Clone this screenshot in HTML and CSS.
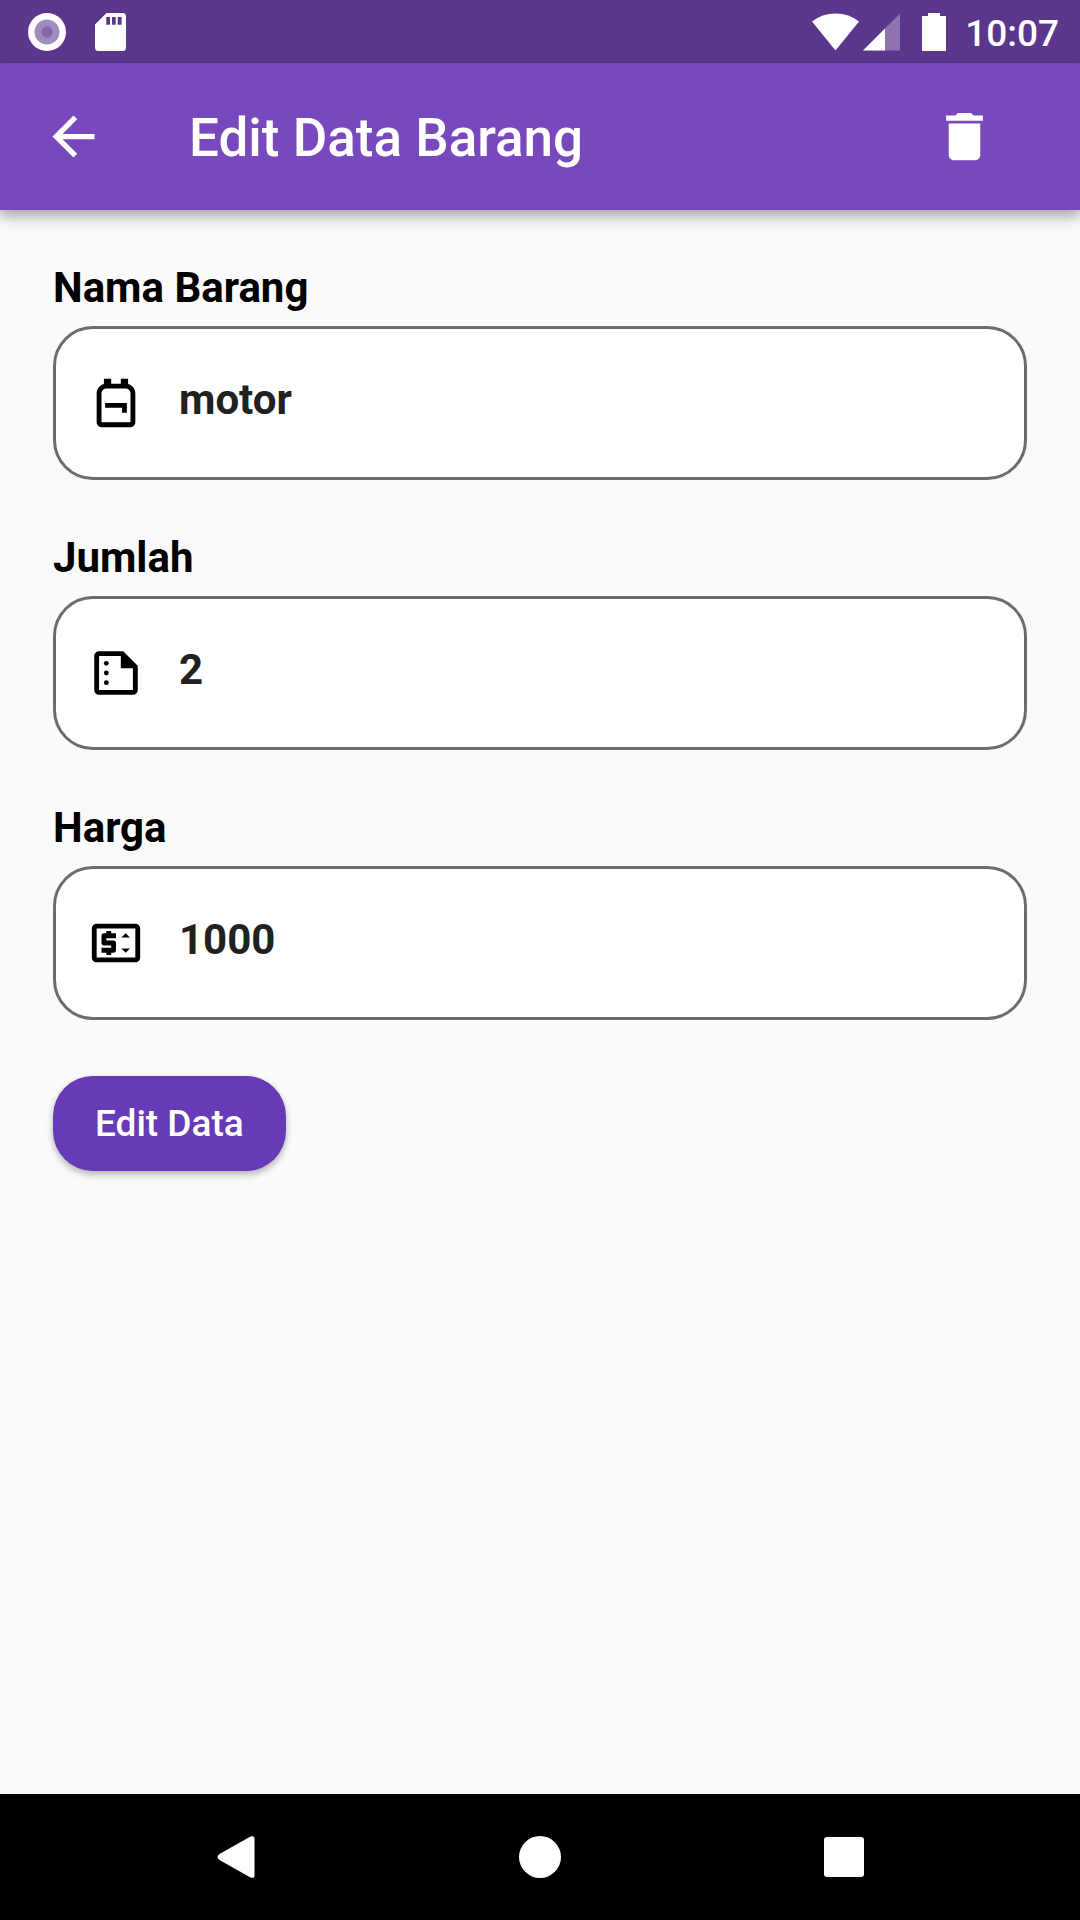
FILE: index.html
```html
<!DOCTYPE html>
<html lang="id">
<head>
<meta charset="utf-8">
<meta name="viewport" content="width=device-width, initial-scale=1">
<title>Edit Data Barang</title>
<link rel="stylesheet" href="styles.css">
</head>
<body>
<div class="status-bar">
  <div class="status-left">
    <svg class="status-dot" viewBox="0 0 38 38" aria-hidden="true"><circle cx="19" cy="19" r="19" fill="#fff"/><circle cx="19" cy="19" r="12.5" fill="#a08cbf"/><circle cx="19" cy="19" r="5.7" fill="#8467ab"/></svg>
    <svg class="status-sd" viewBox="0 0 31 38" aria-hidden="true"><path fill="#fff" fill-rule="evenodd" d="M11.500 0H27.500Q31 0 31 3.500V34.500Q31 38 27.500 38H3.500Q0 38 0 34.500V11.500ZM11.300 4V11.700H15V4ZM17 4V11.700H20.700V4ZM22.700 4V11.700H26.600V4Z"/></svg>
  </div>
  <div class="status-right">
    <svg class="status-wifi" viewBox="0 0 47 38" aria-hidden="true"><path fill="#fff" d="M0 8.500Q10 .5 23.500.5T47 8.500L23.500 37.500Z"/></svg>
    <svg class="status-signal" viewBox="0 0 37 38" aria-hidden="true"><path fill="#8d74ae" d="M37 .5V37.500H0Z"/><path fill="#fff" d="M22 15.500V37.500H0Z"/></svg>
    <svg class="status-battery" viewBox="0 0 24 38" aria-hidden="true"><path fill="#fff" d="M6 0H18V3H24V38H0V3H6Z"/></svg>
    <time class="clock">10:07</time>
  </div>
</div>
<header class="app-bar">
  <button class="icon-button" type="button" aria-label="Kembali">
    <svg class="icon" viewBox="0 0 24 24"><path d="M20 11H7.830l5.590-5.590L12 4l-8 8 8 8 1.410-1.410L7.830 13H20v-2z"/></svg>
  </button>
  <h1 class="title">Edit Data Barang</h1>
  <button class="icon-button" type="button" aria-label="Hapus">
    <svg class="icon" viewBox="0 0 24 24"><path d="M6 19c0 1.100.9 2 2 2h8c1.100 0 2-.9 2-2V7H6v12zM19 4h-3.500l-1-1h-5l-1 1H5v2h14V4z"/></svg>
  </button>
</header>
<main class="content">
  <form class="form">
    <div class="field">
      <label class="label" for="nama">Nama Barang</label>
      <div class="box">
        <svg class="field-icon" viewBox="0 0 24 24" aria-hidden="true"><path fill-rule="evenodd" d="M17 4.140V2h-3v2h-4V2H7v2.140C5.280 4.590 4 6.140 4 8v12c0 1.100.9 2 2 2h12c1.100 0 2-.9 2-2V8c0-1.860-1.280-3.410-3-3.860zM18 20H6V8c0-1.100.9-2 2-2h8c1.100 0 2 .9 2 2v12zM7.500 12v2h7v2h2v-4h-9z"/></svg>
        <input class="input" id="nama" type="text" value="motor">
      </div>
    </div>
    <div class="field">
      <label class="label" for="jumlah">Jumlah</label>
      <div class="box">
        <svg class="field-icon" viewBox="0 0 24 24" aria-hidden="true"><path fill-rule="evenodd" d="M15 3H5c-1.100 0-2 .9-2 2v14c0 1.100.9 2 2 2h14c1.100 0 2-.9 2-2V9l-6-6zM5 19V5h9v5h5v9H5z"/><circle cx="8" cy="8" r="1"/><circle cx="8" cy="12" r="1"/><circle cx="8" cy="16" r="1"/></svg>
        <input class="input" id="jumlah" type="text" inputmode="numeric" value="2">
      </div>
    </div>
    <div class="field">
      <label class="label" for="harga">Harga</label>
      <div class="box">
        <svg class="field-icon" viewBox="0 0 24 24" aria-hidden="true"><path fill-rule="evenodd" d="M20 4H4c-1.110 0-2 .89-2 2v12c0 1.110.89 2 2 2h16c1.110 0 2-.89 2-2V6c0-1.110-.89-2-2-2zm0 14H4V6h16v12z"/><path d="M8 17h2v-1h1c.55 0 1-.45 1-1v-3c0-.55-.45-1-1-1H8v-1h4V8h-2V7H8v1H7c-.55 0-1 .45-1 1v3c0 .55.45 1 1 1h3v1H6v2h2v1zM16 8l-1.750 1.750h3.500zM16 16l1.750-1.750h-3.500z"/></svg>
        <input class="input" id="harga" type="text" inputmode="numeric" value="1000">
      </div>
    </div>
    <button class="submit" type="button">Edit Data</button>
  </form>
</main>
<nav class="nav-bar" aria-label="Sistem">
  <button class="nav-button" type="button" aria-label="Kembali"><svg class="nav-icon" viewBox="0 0 42 42"><path d="M35.500.6Q39.500-1 39.500 3V39Q39.500 43 35.500 41.400L4.500 24Q.5 21 4.500 18Z"/></svg></button>
  <button class="nav-button" type="button" aria-label="Beranda"><svg class="nav-icon" viewBox="0 0 42 42"><circle cx="21" cy="21" r="21"/></svg></button>
  <button class="nav-button" type="button" aria-label="Terbaru"><svg class="nav-icon" viewBox="0 0 42 42"><rect x="1" y="1" width="40" height="40" rx="3"/></svg></button>
</nav>
</body>
</html>
```
FILE: styles.css
```css
* { box-sizing: border-box; }

body {
  margin: 0;
  min-height: 100vh;
  display: flex;
  flex-direction: column;
  background: #fafafa;
  font-family: Roboto, "Liberation Sans", sans-serif;
}

button {
  border: 0;
  margin: 0;
  padding: 0;
  background: none;
  font-family: inherit;
}

svg { display: block; }

.status-bar {
  display: flex;
  justify-content: space-between;
  align-items: center;
  height: 63px;
  padding: 0 21px 0 28px;
  background: #5a378c;
}

.status-left,
.status-right {
  display: flex;
  align-items: center;
}

.status-left { gap: 29px; }
.status-dot { width: 38px; height: 38px; }
.status-sd { width: 31px; height: 38px; }
.status-wifi { width: 47px; height: 38px; margin-right: 4px; }
.status-signal { width: 37px; height: 38px; margin-right: 22px; }
.status-battery { width: 24px; height: 38px; margin-right: 19px; }

.clock {
  color: #fff;
  font-size: 37px;
  line-height: 44px;
  font-weight: 500;
  padding-top: 4px;
}

.app-bar {
  position: relative;
  display: flex;
  align-items: center;
  height: 147px;
  padding: 0 84px 0 42px;
  background: #7849bc;
  box-shadow: 0 5px 10px rgba(0, 0, 0, 0.2), 0 10px 13px rgba(0, 0, 0, 0.14);
}

.icon { width: 63px; height: 63px; fill: #fff; }

.title {
  flex: 1;
  margin: 0;
  padding: 3px 0 0 84px;
  color: #fff;
  font-size: 53px;
  line-height: 62px;
  font-weight: 500;
}

.content {
  flex: 1;
  padding: 54px 53px;
}

.form {
  display: flex;
  flex-direction: column;
  gap: 54px;
}

.field { display: flex; flex-direction: column; gap: 14px; }

.label {
  color: #000;
  font-size: 42px;
  line-height: 48px;
  font-weight: 700;
}

.box {
  display: flex;
  align-items: center;
  height: 154px;
  padding: 0 31px;
  gap: 34px;
  border: 3px solid #6c6c6c;
  border-radius: 40px;
  background: #fff;
}

.field-icon { flex: none; width: 58px; height: 58px; }

.input {
  flex: 1;
  min-width: 0;
  padding: 0 0 6px;
  border: 0;
  outline: 0;
  background: none;
  color: #212121;
  font-family: inherit;
  font-size: 42px;
  line-height: 50px;
  font-weight: 700;
}

.submit {
  align-self: flex-start;
  height: 95px;
  margin-top: 2px;
  padding: 0 42px;
  border-radius: 40px;
  background: #673ab7;
  color: #fff;
  font-size: 37px;
  line-height: 44px;
  font-weight: 500;
  box-shadow: 0 4px 6px rgba(0, 0, 0, 0.2), 0 2px 8px rgba(0, 0, 0, 0.1);
}

.nav-bar {
  display: grid;
  grid-template-columns: repeat(3, 1fr);
  height: 126px;
  padding: 0 84px;
  background: #000;
}

.nav-button {
  display: flex;
  align-items: center;
  justify-content: center;
}

.nav-icon { width: 42px; height: 42px; fill: #fff; }
```
